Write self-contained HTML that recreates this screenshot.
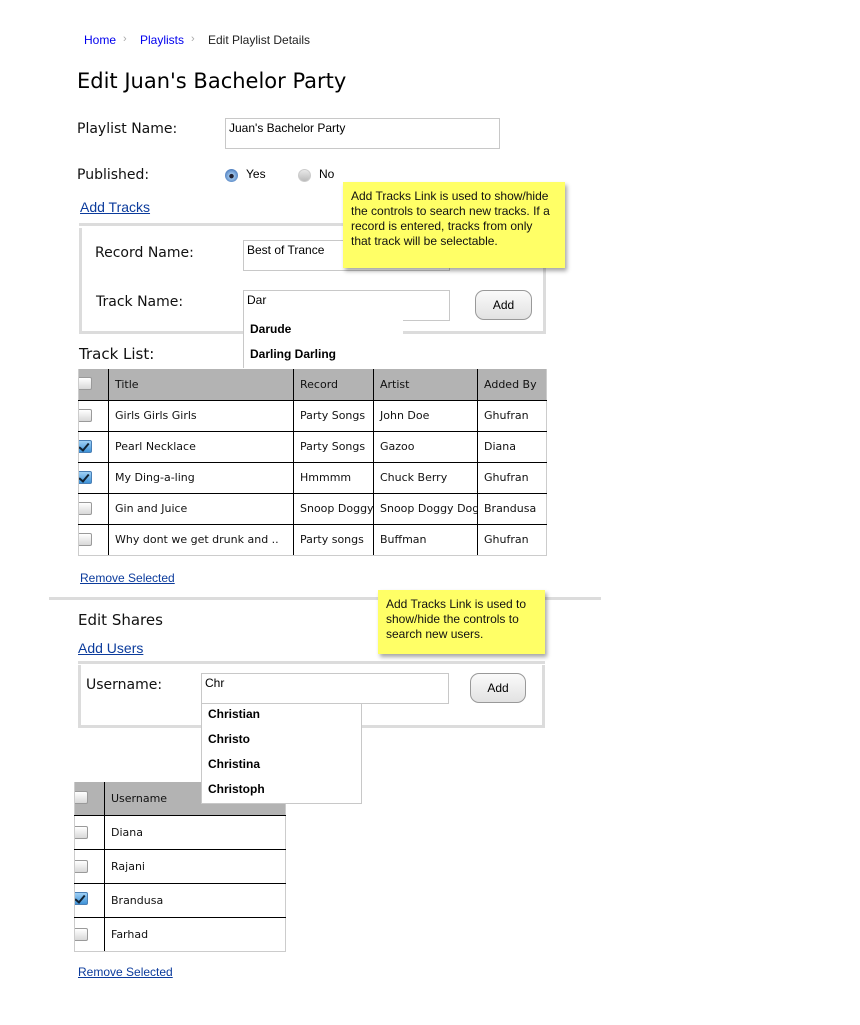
<!DOCTYPE html>
<html><head><meta charset="utf-8"><style>
body{margin:0;width:860px;height:1025px;background:#fff;position:relative;overflow:hidden;font-family:"Liberation Sans",sans-serif;}
.a{position:absolute;white-space:nowrap;}
.h{font-family:"Comic Sans MS","DejaVu Sans",sans-serif;}
.lab{font-size:14px;color:#111;font-family:"Comic Sans MS","DejaVu Sans",sans-serif;}
.inp{position:absolute;border:1px solid #c8c8c8;background:#fff;font-size:12px;padding:2px 3px;box-sizing:border-box;}
.lnk{position:absolute;color:#0b3b9c;text-decoration:underline;font-size:13px;}
.btn{position:absolute;border:1px solid #999;border-radius:9px;background:linear-gradient(#fafafa,#e2e2e2);font-size:12px;text-align:center;box-sizing:border-box;}
.note{position:absolute;background:#ffff66;box-shadow:2px 3px 4px rgba(0,0,0,.35);font-size:12px;line-height:15px;padding:7px 14px 7px 8px;box-sizing:border-box;color:#111;}
.panel{position:absolute;border:3px solid #dcdcdc;box-sizing:border-box;background:#fff;}
.dd{position:absolute;background:#fff;border:1px solid #c8c8c8;font-size:12px;font-weight:bold;box-sizing:border-box;}
.dd div{position:absolute;left:6px;}
.cb{position:absolute;width:13px;height:13px;border:1px solid #9a9a9a;border-left:none;border-radius:0 2px 2px 0;background:linear-gradient(#fff,#d8d8d8);box-sizing:border-box;}
.cb.on{background:linear-gradient(#9fd0f5,#3f93d8);border-color:#4a7fb5;}
.cb.on:after{content:"";position:absolute;left:2px;top:0px;width:4px;height:8px;border:solid #123;border-width:0 2px 2px 0;transform:rotate(40deg);}
table{position:absolute;border-collapse:collapse;table-layout:fixed;font-family:"Comic Sans MS","DejaVu Sans",sans-serif;font-size:11px;color:#111;}
td{border-top:1px solid #000;border-bottom:1px solid #000;border-left:1px solid #000;padding:0 0 0 6px;position:relative;white-space:nowrap;overflow:hidden;}
tr.hd td{background:#b3b3b3;border-top:none;}
td.c{border-left:1px solid #ccc;padding:0;}
td.last{border-right:1px solid #ccc;}
tr:last-child td{border-bottom:1px solid #ccc;}
</style></head><body>

<div class="a" style="left:84px;top:33px;font-size:12px;color:#0000ee;">Home</div>
<div class="a" style="left:123px;top:33px;font-size:11px;color:#aaa;">›</div>
<div class="a" style="left:140px;top:33px;font-size:12px;color:#0000ee;">Playlists</div>
<div class="a" style="left:191px;top:33px;font-size:11px;color:#aaa;">›</div>
<div class="a" style="left:208px;top:33px;font-size:12px;color:#222;">Edit Playlist Details</div>

<div class="a h" style="left:77px;top:69px;font-size:21px;color:#000;">Edit Juan's Bachelor Party</div>

<div class="a lab" style="left:77px;top:121px;">Playlist Name:</div>
<div class="inp" style="left:225px;top:118px;width:275px;height:31px;">Juan's Bachelor Party</div>

<div class="a lab" style="left:77px;top:167px;">Published:</div>
<div class="a" style="left:225px;top:169px;width:13px;height:13px;border-radius:50%;background:radial-gradient(circle at 50% 55%,#223 0 2px,#9cc3ea 2.5px,#4f7fc0 7px);"></div>
<div class="a" style="left:246px;top:167px;font-size:12px;">Yes</div>
<div class="a" style="left:298px;top:169px;width:13px;height:13px;border-radius:50%;background:linear-gradient(#e8e8e8,#bbb);border:1px solid #ccc;box-sizing:border-box;"></div>
<div class="a" style="left:319px;top:167px;font-size:12px;">No</div>

<div class="lnk" style="left:80px;top:199px;font-size:14px;">Add Tracks</div>

<div class="a" style="left:79px;top:223px;width:467px;height:3px;background:#dcdcdc;"></div>
<div class="panel" style="left:79px;top:228px;width:467px;height:106px;border-top:none;"></div>
<div class="a lab" style="left:95px;top:245px;">Record Name:</div>
<div class="inp" style="left:243px;top:240px;width:207px;height:31px;">Best of Trance</div>
<div class="a lab" style="left:96px;top:294px;">Track Name:</div>
<div class="inp" style="left:243px;top:290px;width:207px;height:31px;">Dar</div>
<div class="btn" style="left:475px;top:290px;width:57px;height:30px;line-height:28px;">Add</div>
<div class="dd" style="left:243px;top:320px;width:160px;height:48px;border-top:none;border-right:none;border-bottom:none;"><div style="top:2px">Darude</div><div style="top:27px">Darling Darling</div></div>

<div class="note" style="left:343px;top:182px;width:222px;height:86px;">Add Tracks Link is used to show/hide the controls to search new tracks. If a record is entered, tracks from only that track will be selectable.</div>

<div class="a lab" style="left:79px;top:345px;font-size:15px;">Track List:</div>

<table style="left:78px;top:369px;width:468px;">
<colgroup><col style="width:30px"><col style="width:185px"><col style="width:80px"><col style="width:104px"><col style="width:69px"></colgroup>
<tr class="hd" style="height:31px"><td class="c"><span class="cb" style="left:0;top:8px"></span></td><td>Title</td><td>Record</td><td>Artist</td><td class="last">Added By</td></tr>
<tr style="height:31px"><td class="c"><span class="cb" style="left:0;top:8px"></span></td><td>Girls Girls Girls</td><td>Party Songs</td><td>John Doe</td><td class="last">Ghufran</td></tr>
<tr style="height:31px"><td class="c"><span class="cb on" style="left:0;top:8px"></span></td><td>Pearl Necklace</td><td>Party Songs</td><td>Gazoo</td><td class="last">Diana</td></tr>
<tr style="height:31px"><td class="c"><span class="cb on" style="left:0;top:8px"></span></td><td>My Ding-a-ling</td><td>Hmmmm</td><td>Chuck Berry</td><td class="last">Ghufran</td></tr>
<tr style="height:31px"><td class="c"><span class="cb" style="left:0;top:8px"></span></td><td>Gin and Juice</td><td>Snoop Doggy</td><td>Snoop Doggy Dog</td><td class="last">Brandusa</td></tr>
<tr style="height:31px"><td class="c"><span class="cb" style="left:0;top:8px"></span></td><td>Why dont we get drunk and ..</td><td>Party songs</td><td>Buffman</td><td class="last">Ghufran</td></tr>
</table>

<div class="lnk" style="left:80px;top:571px;font-size:12px;">Remove Selected</div>

<div class="a" style="left:49px;top:597px;width:552px;height:3px;background:#dcdcdc;"></div>

<div class="a lab" style="left:78px;top:611px;font-size:15px;">Edit Shares</div>
<div class="lnk" style="left:78px;top:640px;font-size:14px;">Add Users</div>

<div class="note" style="left:378px;top:590px;width:167px;height:64px;">Add Tracks Link is used to show/hide the controls to search new users.</div>

<div class="a" style="left:78px;top:661px;width:467px;height:3px;background:#dcdcdc;"></div>
<div class="panel" style="left:78px;top:665px;width:467px;height:63px;border-top:none;"></div>
<div class="a lab" style="left:86px;top:677px;">Username:</div>
<div class="inp" style="left:201px;top:673px;width:248px;height:31px;">Chr</div>
<div class="btn" style="left:470px;top:673px;width:56px;height:30px;line-height:28px;">Add</div>

<table style="left:74px;top:782px;width:211px;">
<colgroup><col style="width:30px"><col style="width:181px"></colgroup>
<tr class="hd" style="height:33px"><td class="c"><span class="cb" style="left:0;top:9px"></span></td><td class="last">Username</td></tr>
<tr style="height:34px"><td class="c"><span class="cb" style="left:0;top:10px"></span></td><td class="last">Diana</td></tr>
<tr style="height:34px"><td class="c"><span class="cb" style="left:0;top:10px"></span></td><td class="last">Rajani</td></tr>
<tr style="height:34px"><td class="c"><span class="cb on" style="left:0;top:8px"></span></td><td class="last">Brandusa</td></tr>
<tr style="height:34px"><td class="c"><span class="cb" style="left:0;top:10px"></span></td><td class="last">Farhad</td></tr>
</table>

<div class="dd" style="left:201px;top:703px;width:161px;height:101px;"><div style="top:3px">Christian</div><div style="top:28px">Christo</div><div style="top:53px">Christina</div><div style="top:78px">Christoph</div></div>

<div class="lnk" style="left:78px;top:965px;font-size:12px;">Remove Selected</div>
</body></html>
